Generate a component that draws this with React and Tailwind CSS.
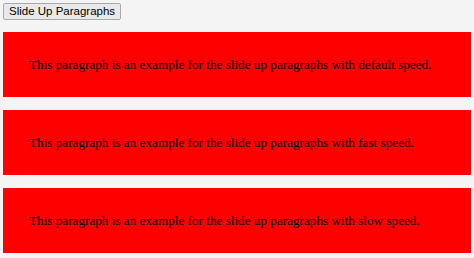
import React from 'react';

const speeds = ['default', 'fast', 'slow'];

export default function App() {
  return (
    <div className="min-h-screen w-full bg-[#f4f4f4] pt-[3px] px-[3px]" style={{ fontFamily: '"Liberation Serif", serif' }}>
      <button
        className="block h-[17px] px-[5px] text-[11.5px] leading-[15px] text-black bg-[#e9e9e9] border border-[#a9a9a9] rounded-[2px]"
        style={{ fontFamily: '"Liberation Sans", Arial, sans-serif' }}
      >
        Slide Up Paragraphs
      </button>
      <div className="mt-[12px] flex flex-col gap-[13px]">
        {speeds.map(s => (
          <p key={s} className="w-[468px] h-[65px] bg-[#ff0000] pl-[26px] flex items-center text-[13.2px] text-black">
            This paragraph is an example for the slide up paragraphs with {s} speed.
          </p>
        ))}
      </div>
    </div>
  );
}
